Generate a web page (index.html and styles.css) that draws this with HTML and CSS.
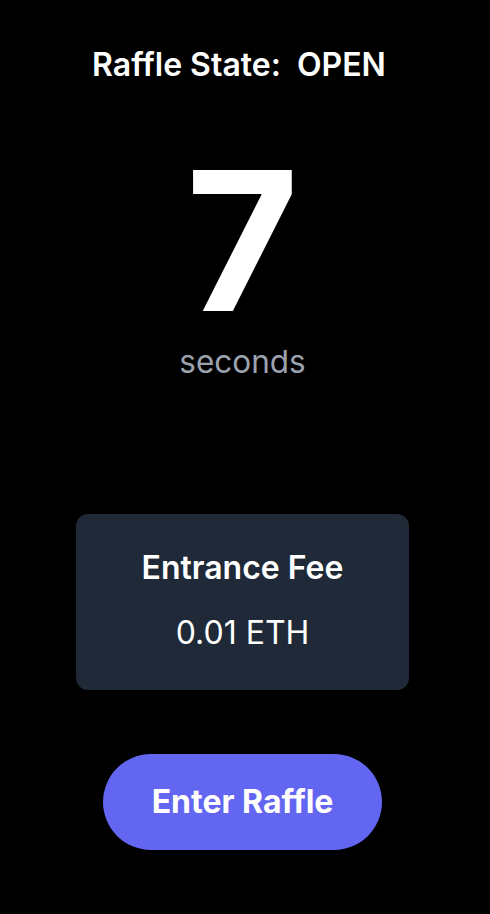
FILE: index.html
```html
<!DOCTYPE html>
<html lang="en">
<head>
<meta charset="utf-8">
<title>Raffle</title>
<link rel="stylesheet" href="styles.css">
</head>
<body>
<main class="page">
  <h1 class="state">Raffle State:  OPEN</h1>
  <section class="timer">
    <div class="count">7</div>
    <div class="unit">seconds</div>
  </section>
  <section class="fee-card">
    <h2 class="fee-title">Entrance Fee</h2>
    <p class="fee-value">0.01 ETH</p>
  </section>
  <button class="enter-btn" type="button">Enter Raffle</button>
</main>
</body>
</html>
```

FILE: styles.css
```css
html, body {
  margin: 0;
  padding: 0;
  background: #000;
}
body {
  font-family: Inter, "Noto Sans", sans-serif;
  color: #fff;
  width: 490px;
  height: 914px;
  overflow: hidden;
}
.page {
  display: flex;
  flex-direction: column;
  align-items: center;
  padding: 47px 5px 0 0;
}
.state {
  margin: 0 0 0 -7px;
  font-size: 32px;
  line-height: 36px;
  font-weight: 600;
  white-space: pre;
}
.timer {
  margin-top: 68px;
  display: flex;
  flex-direction: column;
  align-items: center;
}
.count {
  font-size: 194px;
  line-height: 180px;
  height: 180px;
  font-weight: 700;
}
.unit {
  margin-top: 13px;
  font-size: 31.5px;
  line-height: 36px;
  color: #9ca3af;
}
.fee-card {
  margin-top: 134px;
  width: 333px;
  box-sizing: border-box;
  padding: 36px 0 39px;
  background: #1f2937;
  border-radius: 12px;
  display: flex;
  flex-direction: column;
  align-items: center;
  gap: 29px;
}
.fee-title {
  margin: 0;
  font-size: 32px;
  line-height: 36px;
  font-weight: 600;
}
.fee-value {
  margin: 0;
  font-size: 32px;
  line-height: 36px;
  font-weight: 400;
}
.enter-btn {
  margin-top: 64px;
  width: 279px;
  height: 96px;
  border: none;
  border-radius: 48px;
  background: #6366f1;
  color: #fff;
  font-family: Inter, "Noto Sans", sans-serif;
  font-size: 32px;
  line-height: 36px;
  font-weight: 700;
  padding: 0;
}
```
